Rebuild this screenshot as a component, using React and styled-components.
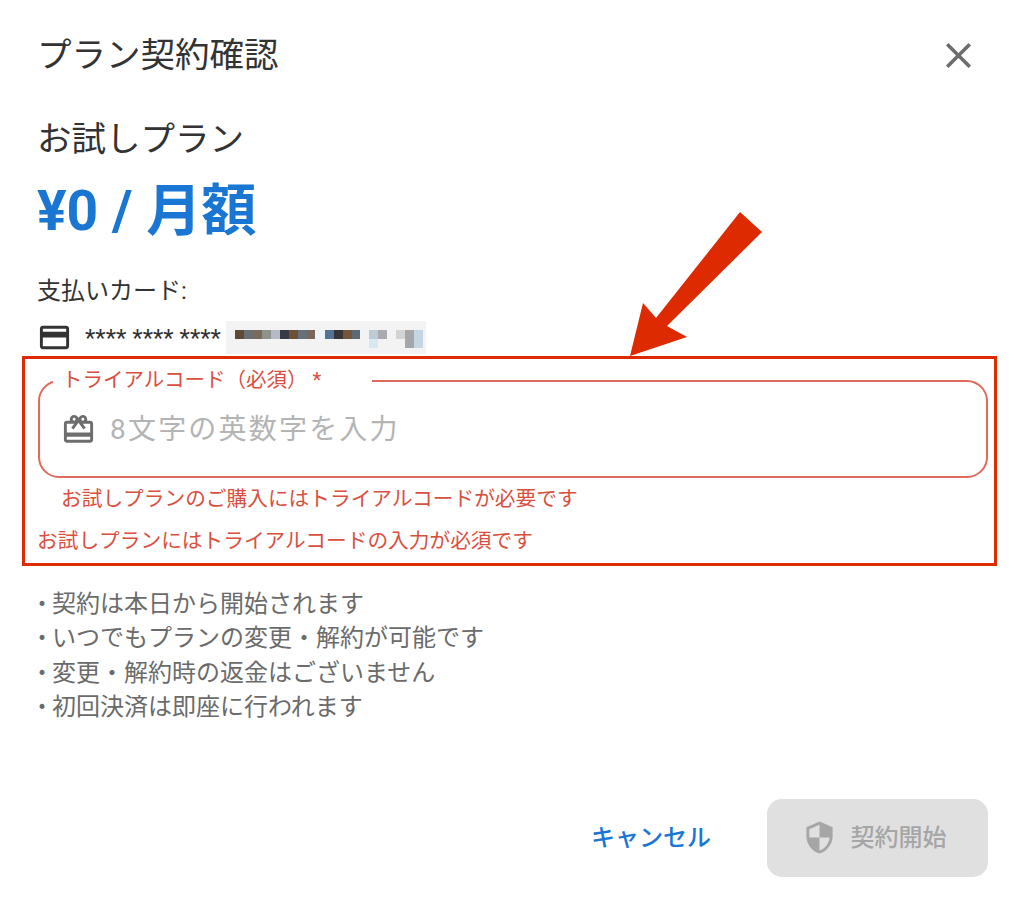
import React from "react";
import styled, { createGlobalStyle } from "styled-components";

const Global = createGlobalStyle`
  html, body { margin: 0; padding: 0; background: #fff; }
  * { box-sizing: border-box; }
  body { font-family: Roboto, "Noto Sans CJK JP", sans-serif; }
`;

const Dialog = styled.div`
  position: relative;
  width: 1024px;
  height: 911px;
  background: #fff;
  color: #333;
  padding: 0 36px 0 38px;
  display: flex;
  flex-direction: column;
  overflow: hidden;
`;

const Header = styled.header`
  height: 110px;
  display: flex;
  align-items: center;
  justify-content: space-between;
`;

const Title = styled.h2`
  margin: 0 0 0 -1px;
  font-size: 34.5px;
  font-weight: 400;
  line-height: 1;
`;

const CloseButton = styled.button`
  border: 0;
  background: none;
  padding: 0;
  width: 43px;
  height: 43px;
  margin-right: 8px;
  color: #6d6d6d;
  display: flex;
`;

const PlanName = styled.h3`
  margin: 0 0 0 -1px;
  height: 58px;
  font-size: 34.5px;
  font-weight: 400;
  line-height: 58px;
`;

const Price = styled.div`
  height: 86px;
  margin-left: -1px;
  font-size: 55.2px;
  font-weight: 700;
  line-height: 86px;
  color: #1976d2;
`;

const CardLabel = styled.div`
  height: 46px;
  padding-top: 16px;
  margin-left: -1px;
  font-size: 24px;
  line-height: 42px;
  box-sizing: content-box;
`;

const CardRow = styled.div`
  height: 43px;
  display: flex;
  align-items: center;
  gap: 13px;
  font-size: 24px;
  color: #333;
`;

const CardIcon = styled.svg`
  flex: none;
  margin-left: -1px;
`;

const Blur = styled.svg`
  display: block;
  margin-left: -8px;
`;

const Annotation = styled.section`
  height: 210px;
  margin: -3px -9px 0 -16px;
  border: 3px solid #dd2a00;
  padding: 8px 6px 0 13px;
  flex: none;
`;

const Field = styled.fieldset`
  margin: 0;
  padding: 0;
  height: 111px;
  border: 2px solid #e06a5e;
  border-radius: 21px;
`;

const FieldBody = styled.div`
  height: 100%;
  padding: 0 0 12px 21px;
  display: flex;
  align-items: center;
  gap: 14px;
  color: #6d6d6d;
`;

const Legend = styled.legend`
  margin-left: 13px;
  width: 319px;
  padding: 0 0 0 9px;
  font-size: 20.5px;
  line-height: 27px;
  color: #d9503f;
  white-space: pre;
`;

const CodeInput = styled.input`
  flex: 1;
  min-width: 0;
  border: 0;
  outline: 0;
  padding: 0;
  background: none;
  font: inherit;
  font-size: 28px;
  letter-spacing: 2.2px;
  color: #333;
  &::placeholder { color: #b4b4b4; opacity: 1; }
`;

const FieldIcon = styled.svg`
  flex: none;
`;

const HelperText = styled.p`
  margin: 0 0 0 -1px;
  font-size: 20.7px;
  line-height: 28px;
  color: #d9503f;
  padding-left: ${(p) => p.$indent}px;
  margin-top: ${(p) => p.$top}px;
`;

const Notes = styled.ul`
  list-style: none;
  margin: 21px 0 0;
  padding: 0;
  font-size: 24px;
  line-height: 34.4px;
  color: #6b6b6b;
`;

const Footer = styled.footer`
  margin-top: auto;
  padding-bottom: 34px;
  display: flex;
  align-items: flex-start;
  justify-content: flex-end;
  gap: 56px;
`;

const CancelButton = styled.button`
  border: 0;
  background: none;
  padding: 0 0 6px;
  height: 78px;
  font: inherit;
  font-size: 24px;
  font-weight: 500;
  color: #1976d2;
`;

const SubmitButton = styled.button`
  width: 221px;
  height: 78px;
  border: 0;
  border-radius: 15px;
  padding: 0 7px 2px 0;
  background: #e0e0e0;
  color: #a6a6a6;
  font: inherit;
  font-size: 24px;
  font-weight: 500;
  display: flex;
  align-items: center;
  justify-content: center;
  gap: 14px;
`;

const SubmitLabel = styled.span`
  margin-bottom: 4px;
`;

const Arrow = styled.svg`
  position: absolute;
  left: 620px;
  top: 205px;
`;

const px = [
  [235, 329, 9, 9, "#5f4a38"], [244, 329, 9, 9, "#6b6e70"], [253, 329, 9, 9, "#7a6a5c"],
  [262, 329, 9, 9, "#8e938a"], [271, 329, 9, 9, "#b5bac6"], [280, 329, 9, 9, "#343a46"],
  [289, 329, 9, 9, "#6d5038"], [298, 329, 9, 9, "#667078"], [307, 329, 8, 9, "#7b6757"],
  [316, 329, 9, 9, "#eef4f6"], [325, 329, 9, 9, "#507396"], [334, 329, 9, 9, "#36363a"],
  [343, 329, 9, 9, "#75563a"], [352, 329, 8, 9, "#5c6a76"], [369, 329, 9, 9, "#bccbd6"],
  [378, 329, 9, 9, "#a8acb0"], [369, 338, 9, 9, "#d6e8f0"], [396, 329, 9, 9, "#d4d4d4"],
  [405, 329, 9, 18, "#a4a6a8"], [414, 329, 9, 18, "#c4d6e4"],
];

export default function App() {
  return (
    <Dialog>
      <Global />
      <Header>
        <Title>プラン契約確認</Title>
        <CloseButton aria-label="閉じる">
          <svg width="43" height="43" viewBox="0 0 24 24" fill="currentColor">
            <path d="M19 6.41 17.59 5 12 10.59 6.41 5 5 6.41 10.59 12 5 17.59 6.41 19 12 13.41 17.59 19 19 17.59 13.41 12z" />
          </svg>
        </CloseButton>
      </Header>
      <PlanName>お試しプラン</PlanName>
      <Price>¥0 / 月額</Price>
      <CardLabel>支払いカード:</CardLabel>
      <CardRow>
        <CardIcon width="35" height="35" viewBox="0 0 24 24" fill="#333">
          <path d="M20 4H4c-1.11 0-1.99.89-1.99 2L2 18c0 1.11.89 2 2 2h16c1.11 0 2-.89 2-2V6c0-1.11-.89-2-2-2zm0 14H4v-6h16v6zm0-10H4V6h16v2z" />
        </CardIcon>
        <span>**** **** ****</span>
        <Blur width="200" height="33" viewBox="226 320 200 33">
          <rect x="226" y="320" width="200" height="33" fill="#f3f3f3" />
          {px.map(([x, y, w, h, c], i) => (
            <rect key={i} x={x} y={y} width={w} height={h} fill={c} />
          ))}
        </Blur>
      </CardRow>
      <Annotation>
        <Field>
          <Legend>トライアルコード（必須） *</Legend>
          <FieldBody>
            <FieldIcon width="35" height="35" viewBox="0 0 24 24" fill="currentColor">
              <path d="M20 6h-2.18c.11-.31.18-.65.18-1 0-1.66-1.34-3-3-3-1.05 0-1.96.54-2.5 1.35l-.5.67-.5-.68C10.96 2.54 10.05 2 9 2 7.34 2 6 3.34 6 5c0 .35.07.69.18 1H4c-1.11 0-1.99.89-1.99 2L2 19c0 1.11.89 2 2 2h16c1.11 0 2-.89 2-2V8c0-1.11-.89-2-2-2zm-5-2c.55 0 1 .45 1 1s-.45 1-1 1-1-.45-1-1 .45-1 1-1zM9 4c.55 0 1 .45 1 1s-.45 1-1 1-1-.45-1-1 .45-1 1-1zm11 15H4v-2h16v2zm0-5H4V8h5.08L7 10.83 8.62 12 11 8.76l1-1.36 1 1.36L15.38 12 17 10.83 14.92 8H20v6z" />
            </FieldIcon>
            <CodeInput placeholder="8文字の英数字を入力" />
          </FieldBody>
        </Field>
        <HelperText $indent={24} $top={7}>お試しプランのご購入にはトライアルコードが必要です</HelperText>
        <HelperText $indent={0} $top={14}>お試しプランにはトライアルコードの入力が必須です</HelperText>
      </Annotation>
      <Notes>
        <li>• 契約は本日から開始されます</li>
        <li>• いつでもプランの変更・解約が可能です</li>
        <li>• 変更・解約時の返金はございません</li>
        <li>• 初回決済は即座に行われます</li>
      </Notes>
      <Footer>
        <CancelButton>キャンセル</CancelButton>
        <SubmitButton disabled>
          <svg width="35" height="35" viewBox="0 0 24 24" fill="currentColor">
            <path d="M12 1 3 5v6c0 5.55 3.84 10.74 9 12 5.16-1.26 9-6.45 9-12V5l-9-4zm0 10.99h7c-.53 4.12-3.28 7.79-7 8.94V12H5V6.3l7-3.11v8.8z" />
          </svg>
          <SubmitLabel>契約開始</SubmitLabel>
        </SubmitButton>
      </Footer>
      <Arrow width="150" height="160" viewBox="620 205 150 160">
        <polygon fill="#dd2a00" points="740,212 762,232 667,326 687,337 630,356 643,303 656,318" />
      </Arrow>
    </Dialog>
  );
}
